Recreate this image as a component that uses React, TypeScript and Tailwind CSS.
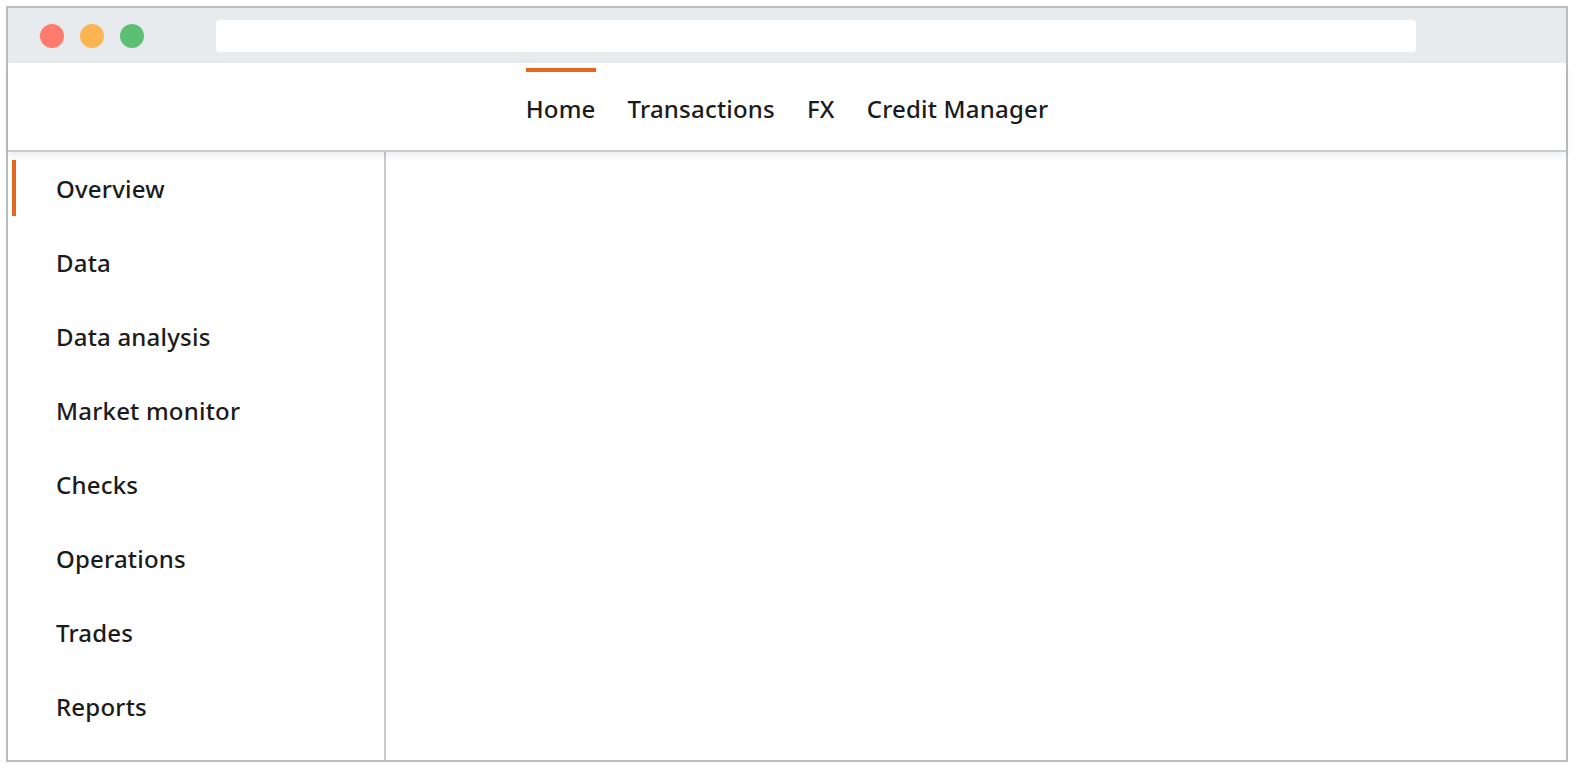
const navItems = ['Home', 'Transactions', 'FX', 'Credit Manager'];
const sideItems = ['Overview', 'Data', 'Data analysis', 'Market monitor', 'Checks', 'Operations', 'Trades', 'Reports'];

export default function App() {
    return (
        <div className="w-[1576px] h-[768px] bg-white p-[6px] font-['Noto_Sans',sans-serif] text-[#1b1b1b]">
            <div className="w-[1562px] h-[756px] border-2 border-[#b9bdc1] flex flex-col bg-white">
                {/* Browser chrome */}
                <div className="h-[55px] shrink-0 bg-[#e8ebee] flex items-center pl-[32px]">
                    <div className="flex gap-[16px]">
                        <span className="w-[24px] h-[24px] rounded-full bg-[#ff7b6d]" />
                        <span className="w-[24px] h-[24px] rounded-full bg-[#fbb552]" />
                        <span className="w-[24px] h-[24px] rounded-full bg-[#5dbf74]" />
                    </div>
                    <div className="ml-[72px] w-[1200px] h-[32px] rounded-[4px] bg-white" />
                </div>

                {/* Top nav */}
                <div className="h-[89px] shrink-0 border-b-2 border-[#c8cbd0] flex justify-center gap-[32px] pt-[5px] relative z-10 shadow-[0_4px_8px_rgba(0,0,0,0.07)] bg-white">
                    {navItems.map((item, i) => (
                        <div key={item} className={`flex flex-col border-t-4 ${i === 0 ? 'border-[#e5671e]' : 'border-transparent'}`}>
                            <span className="mt-[21px] text-[24px] leading-[32px] font-medium tracking-[0.2px]">{item}</span>
                        </div>
                    ))}
                </div>

                <div className="flex-1 flex min-h-0">
                    {/* Sidebar */}
                    <div className="w-[378px] shrink-0 border-r-2 border-[#c8cbd0] flex flex-col gap-[18px] pt-[8px]">
                        {sideItems.map((item, i) => (
                            <div
                                key={item}
                                className={`h-[56px] ml-[4px] border-l-4 pl-[40px] pt-[1px] flex items-center ${i === 0 ? 'border-[#e5671e]' : 'border-transparent'}`}
                            >
                                <span className="text-[24px] leading-[32px] font-medium tracking-[0.2px]">{item}</span>
                            </div>
                        ))}
                    </div>

                    <main className="flex-1" />
                </div>
            </div>
        </div>
    );
}
